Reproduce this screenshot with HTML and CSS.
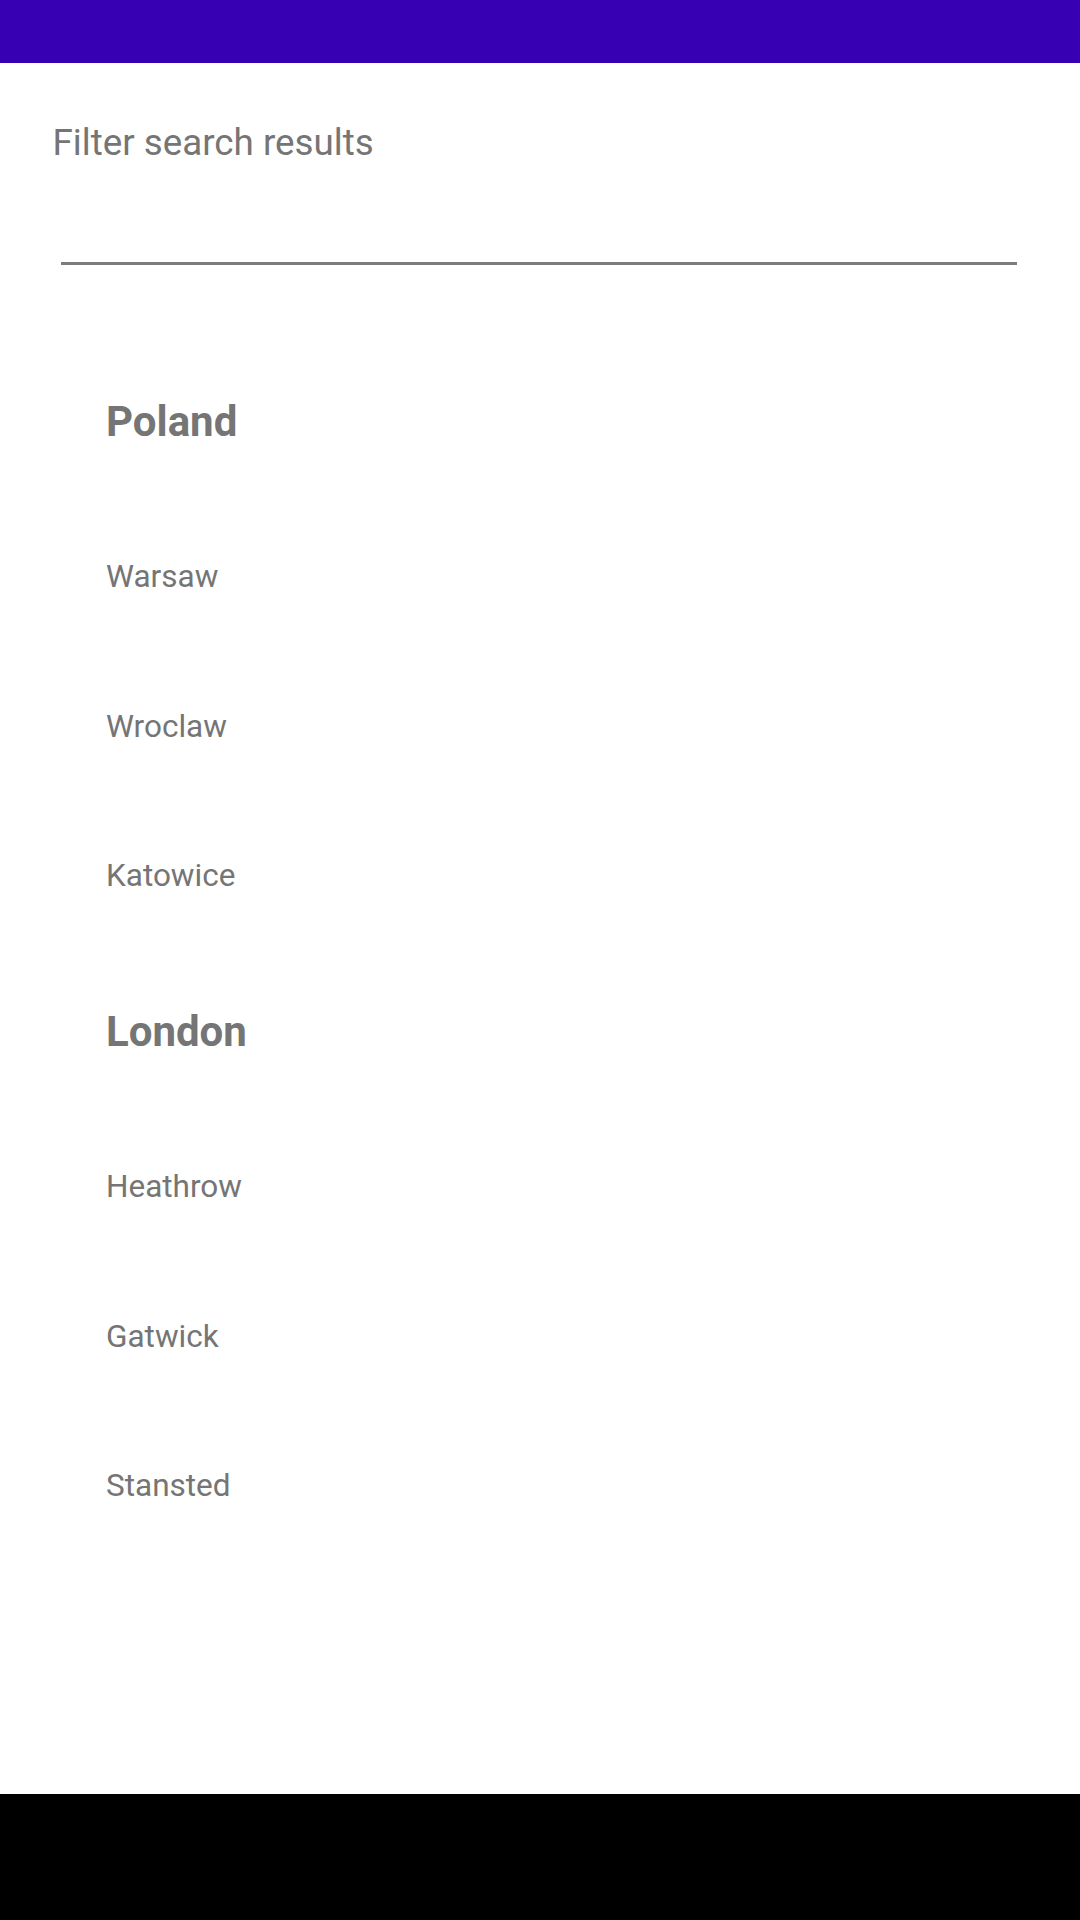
FILE: index.html
```html
<!DOCTYPE html>
<html>
<head>
<meta charset="utf-8">
<link rel="stylesheet" href="styles.css">
</head>
<body>
<div class="screen">
  <div class="status-bar"></div>
  <main class="content">
    <div class="search">
      <div class="search-hint">Filter search results</div>
      <div class="search-line"></div>
    </div>
    <div class="list">
      <div class="group-header">Poland</div>
      <div class="item">Warsaw</div>
      <div class="item">Wroclaw</div>
      <div class="item">Katowice</div>
      <div class="group-header">London</div>
      <div class="item">Heathrow</div>
      <div class="item">Gatwick</div>
      <div class="item">Stansted</div>
    </div>
  </main>
  <div class="nav-bar"></div>
</div>
</body>
</html>
```

FILE: styles.css
```css
html, body {
  margin: 0;
  padding: 0;
  background: #ffffff;
}

body {
  font-family: Roboto, "Noto Sans", "Liberation Sans", sans-serif;
  color: #757575;
}

.screen {
  width: 1080px;
  height: 1920px;
  display: flex;
  flex-direction: column;
  overflow: hidden;
}

.status-bar {
  height: 63px;
  background: #3700b3;
  flex: none;
}

.content {
  flex: 1;
  display: flex;
  flex-direction: column;
}

.search {
  padding-top: 62px;
}

.search-hint {
  font-size: 36.75px;
  line-height: 1;
  padding-left: 52.5px;
  color: #757575;
}

.search-line {
  margin-top: 100px;
  margin-left: 61px;
  width: 956px;
  height: 3px;
  background: #7c7c7c;
}

.list {
  padding-top: 76px;
  display: flex;
  flex-direction: column;
}

.group-header {
  height: 161.5px;
  display: flex;
  align-items: center;
  padding-left: 106px;
  font-size: 42px;
  line-height: 1;
  font-weight: 700;
  color: #757575;
}

.item {
  height: 149.5px;
  display: flex;
  align-items: center;
  padding-left: 106px;
  font-size: 31.5px;
  line-height: 1;
  color: #757575;
}

.nav-bar {
  height: 126px;
  background: #000000;
  flex: none;
}
```
